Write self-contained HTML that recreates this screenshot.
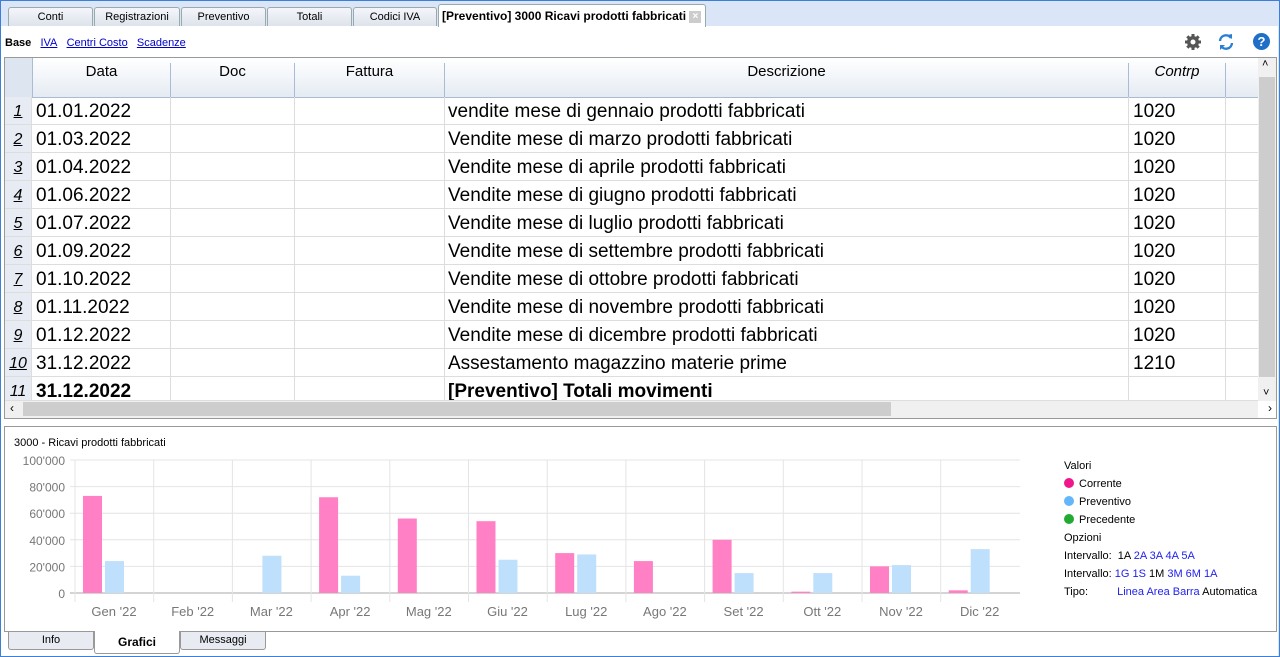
<!DOCTYPE html>
<html><head><meta charset="utf-8"><style>
*{box-sizing:border-box;margin:0;padding:0}
body{width:1280px;height:657px;background:#dae6f7;font-family:"Liberation Sans",sans-serif;position:relative;overflow:hidden}
.a{position:absolute}
.tab{position:absolute;top:7px;height:19px;border:1px solid #9aa;border-bottom:none;background:linear-gradient(#f4f6fa,#dde3ec);font-size:11px;text-align:center;line-height:18px;border-radius:3px 3px 0 0}
.lk{color:#00c;text-decoration:underline;font-size:11px}
.row{position:absolute;left:5px;width:1253px;height:28px;border-bottom:1px solid #ddd;font-size:19px;line-height:30px}
.c{position:absolute;top:0;height:28px;border-right:1px solid #ddd}
.n{background:#e7ecf4;width:27px;left:0;font-style:italic;font-size:16px;text-align:center;text-decoration:underline}
.dot{display:inline-block;width:10px;height:10px;border-radius:50%;vertical-align:-1px;margin-right:5px}
</style></head><body>
<div class="a" style="left:0;top:0;width:1280px;height:657px;border:1px solid #3c7fd6;z-index:9;pointer-events:none"></div>
<div class="a" style="left:1px;top:26px;width:1277px;height:631px;background:#fff;"></div>
<div class="tab" style="left:8px;width:85px">Conti</div>
<div class="tab" style="left:94px;width:86px">Registrazioni</div>
<div class="tab" style="left:181px;width:85px">Preventivo</div>
<div class="tab" style="left:267px;width:85px">Totali</div>
<div class="tab" style="left:353px;width:84px">Codici IVA</div>
<div class="tab" style="left:438px;top:4px;height:23px;width:268px;background:#fff;font-weight:bold;font-size:12px;line-height:22px;text-align:left;padding-left:3px">[Preventivo] 3000 Ricavi prodotti fabbricati <span style="display:inline-block;width:12px;height:12px;background:#ccc;color:#fff;font-size:10px;line-height:12px;text-align:center;vertical-align:middle">×</span></div>
<div class="a" style="left:5px;top:37px;font-size:11px"><b>Base</b>&nbsp;&nbsp; <span class="lk">IVA</span>&nbsp;&nbsp; <span class="lk">Centri Costo</span>&nbsp;&nbsp; <span class="lk">Scadenze</span></div>
<svg class="a" style="left:1184px;top:33px" width="18" height="18" viewBox="0 0 18 18"><g fill="#555"><circle cx="9" cy="9" r="6"/><g stroke="#555" stroke-width="3"><line x1="9" y1="1" x2="9" y2="17"/><line x1="1" y1="9" x2="17" y2="9"/><line x1="3.3" y1="3.3" x2="14.7" y2="14.7"/><line x1="14.7" y1="3.3" x2="3.3" y2="14.7"/></g><circle cx="9" cy="9" r="2.5" fill="#fff"/></g></svg>
<svg class="a" style="left:1217px;top:33px" width="18" height="18" viewBox="0 0 18 18" fill="none" stroke="#2a7fd4" stroke-width="2.4"><path d="M3 8A6 6 0 0 1 14 5"/><path d="M15 10A6 6 0 0 1 4 13"/><path d="M10 2l5 4V1z" fill="#2a7fd4" stroke="none"/><path d="M3 17v-5h5z" fill="#2a7fd4" stroke="none"/></svg>
<div class="a" style="left:1253px;top:33px;width:17px;height:17px;border-radius:50%;background:#1f6fc8;color:#fff;font-weight:bold;font-size:13px;text-align:center;line-height:17px">?</div>
<div class="a" style="left:4px;top:57px;width:1273px;height:362px;border:1px solid #999;overflow:hidden">
<div class="a" style="left:0;top:0;width:1253px;height:40px;background:linear-gradient(#fff,#e5ebf3);border-bottom:1px solid #a9bcd3;font-size:15px">
<div class="a" style="left:0;width:28px;height:39px;background:#dde5f0;border-right:1px solid #a9bcd3"></div>
<div class="a" style="left:28px;width:138px;height:39px;border-right:1px solid #a9bcd3;text-align:center;top:5px">Data</div>
<div class="a" style="left:166px;width:124px;height:39px;border-right:1px solid #a9bcd3;text-align:center;top:5px">Doc</div>
<div class="a" style="left:290px;width:150px;height:39px;border-right:1px solid #a9bcd3;text-align:center;top:5px">Fattura</div>
<div class="a" style="left:440px;width:684px;height:39px;border-right:1px solid #a9bcd3;text-align:center;top:5px">Descrizione</div>
<div class="a" style="left:1124px;width:97px;height:39px;border-right:1px solid #a9bcd3;text-align:center;top:5px;font-style:italic">Contrp</div>
</div>
</div>
<div id="rows"></div>
<div class="a" style="left:1258px;top:58px;width:18px;height:343px;background:#f0f0f0"><div style="margin:19px 1px 0;height:300px;background:#cdcdcd"></div><div class="a" style="top:0;left:4px;font-size:11px">˄</div><div class="a" style="bottom:2px;left:5px;font-size:11px">˅</div></div>
<div class="a" style="left:5px;top:401px;width:1253px;height:17px;background:#f0f0f0"><div class="a" style="left:18px;top:1px;width:868px;height:14px;background:#cdcdcd"></div><span class="a" style="left:5px;top:0;font-size:12px">‹</span><span class="a" style="right:-14px;top:0;font-size:12px">›</span></div>
<div class="a" style="left:4px;top:426px;width:1273px;height:206px;border:1px solid #999;background:#fff"></div>
<div class="a" style="left:14px;top:437px;font-size:11px">3000 - Ricavi prodotti fabbricati</div>
<svg class="a" style="left:0;top:450px" width="1040" height="175" id="ch"></svg>
<div class="a" style="left:1064px;top:457px;font-size:11px;line-height:18px">Valori<br>
<span class="dot" style="background:#f0168c"></span>Corrente<br><span class="dot" style="background:#63b6fa"></span>Preventivo<br><span class="dot" style="background:#22aa33"></span>Precedente<br>
<div style="margin-top:0">Opzioni</div>
Intervallo: &nbsp;1A <span style="color:#22e">2A 3A 4A 5A</span><br>
Intervallo: <span style="color:#22e">1G 1S</span> 1M <span style="color:#22e">3M 6M 1A</span><br>
Tipo: <span style="display:inline-block;width:26px"></span><span style="color:#22e">Linea Area Barra</span> Automatica</div>
<div class="a" style="left:8px;top:632px;width:86px;height:18px;border:1px solid #999;border-top:none;background:#e8ecf2;font-size:11px;text-align:center;line-height:16px;border-radius:0 0 3px 3px">Info</div>
<div class="a" style="left:94px;top:631px;width:86px;height:23px;border:1px solid #999;border-top:none;background:#fff;font-size:12px;font-weight:bold;text-align:center;line-height:22px;border-radius:0 0 3px 3px">Grafici</div>
<div class="a" style="left:180px;top:632px;width:86px;height:18px;border:1px solid #999;border-top:none;background:#e8ecf2;font-size:11px;text-align:center;line-height:16px;border-radius:0 0 3px 3px">Messaggi</div>
<script>
var d=[["01.01.2022","vendite mese di gennaio prodotti fabbricati","1020"],["01.03.2022","Vendite mese di marzo prodotti fabbricati","1020"],["01.04.2022","Vendite mese di aprile prodotti fabbricati","1020"],["01.06.2022","Vendite mese di giugno prodotti fabbricati","1020"],["01.07.2022","Vendite mese di luglio prodotti fabbricati","1020"],["01.09.2022","Vendite mese di settembre prodotti fabbricati","1020"],["01.10.2022","Vendite mese di ottobre prodotti fabbricati","1020"],["01.11.2022","Vendite mese di novembre prodotti fabbricati","1020"],["01.12.2022","Vendite mese di dicembre prodotti fabbricati","1020"],["31.12.2022","Assestamento magazzino materie prime","1210"],["31.12.2022","[Preventivo] Totali movimenti",""]];
var h="";d.forEach(function(r,i){var t=97+i*28,b=i==10?"font-weight:bold;":"",ht=i==10?24:28;
h+='<div class="row" style="top:'+t+'px;height:'+ht+'px;overflow:hidden;'+b+'"><div class="c n" style="'+(i==10?"text-decoration:none;font-weight:normal":"")+'">'+(i+1)+'</div><div class="c" style="left:28px;width:138px;padding-left:3px">'+r[0]+'</div><div class="c" style="left:166px;width:124px"></div><div class="c" style="left:290px;width:150px"></div><div class="c" style="left:440px;width:684px;padding-left:3px">'+r[1]+'</div><div class="c" style="left:1124px;width:97px;padding-left:4px">'+r[2]+'</div></div>'});
document.getElementById("rows").innerHTML=h;
var s="",y0=143,k=1.33;
for(var g=0;g<=5;g++){var y=y0-g*26.6;s+='<line x1="70" x2="1020" y1="'+y+'" y2="'+y+'" stroke="'+(g?"#e4e4e4":"#aaa")+'"/><text x="65" y="'+(y+5)+'" text-anchor="end" font-size="12" fill="#777">'+(g?g*20+"\'000":"0")+'</text>'}
var m=["Gen","Feb","Mar","Apr","Mag","Giu","Lug","Ago","Set","Ott","Nov","Dic"],p=[73,0,0,72,56,54,30,24,40,1,20,2],b=[24,0,28,13,0,25,29,0,15,15,21,33];
for(var i=0;i<12;i++){var x=75+i*78.7;s+='<line x1="'+x+'" x2="'+x+'" y1="10" y2="152" stroke="#e4e4e4"/>';
if(p[i])s+='<rect x="'+(x+8)+'" y="'+(y0-p[i]*k)+'" width="19" height="'+p[i]*k+'" fill="#ff80c4"/>';
if(b[i])s+='<rect x="'+(x+30)+'" y="'+(y0-b[i]*k)+'" width="19" height="'+b[i]*k+'" fill="#bfe0fc"/>';
s+='<text x="'+(x+39)+'" y="166" text-anchor="middle" font-size="13" fill="#777">'+m[i]+' \'22</text>'}
document.getElementById("ch").innerHTML=s;
</script>
</body></html>
